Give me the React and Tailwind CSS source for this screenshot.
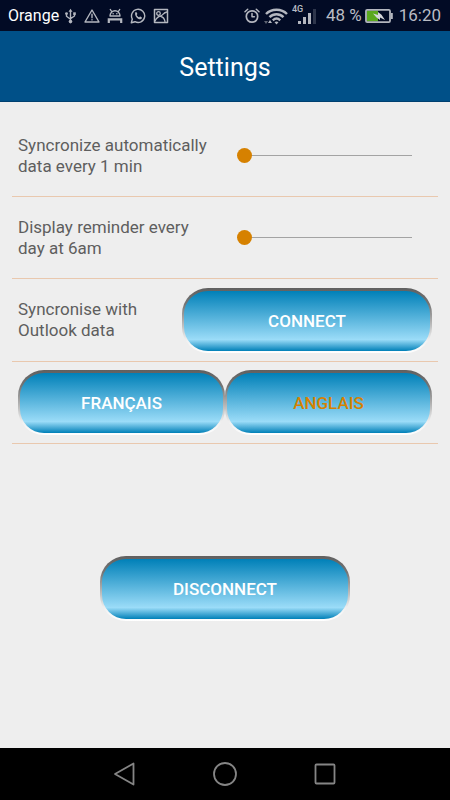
import { useState } from "react";

const glossyButtonClass =
  "h-[65px] cursor-pointer rounded-[26px] border-2 border-t-[3px] border-transparent pt-[2px] text-[17px] font-medium uppercase [background:linear-gradient(to_bottom,#0080b8_0%,#9bdcf8_81%,#0080b8_100%)_padding-box,linear-gradient(to_bottom,#606060_0%,#757575_25%,#f0f0f0_80%,#ffffff_100%)_border-box]";

const sliderClass =
  "block h-4 w-full cursor-pointer appearance-none bg-transparent [&::-webkit-slider-runnable-track]:h-px [&::-webkit-slider-runnable-track]:bg-[#a3a3a3] [&::-webkit-slider-thumb]:-mt-[7px] [&::-webkit-slider-thumb]:size-[15px] [&::-webkit-slider-thumb]:appearance-none [&::-webkit-slider-thumb]:rounded-full [&::-webkit-slider-thumb]:bg-[#d68100]";

const rowClass =
  "flex min-h-[82px] items-center border-b border-[#e9c8ae] px-[6px]";

const labelClass = "text-[17px] leading-[21px] text-[#5e5e5e]";

function StatusIcon({ width = 16, children }) {
  return (
    <svg
      width={width}
      height="16"
      viewBox={`0 0 ${width} 16`}
      fill="none"
      stroke="#b4b7bf"
      strokeWidth="1.4"
      strokeLinecap="round"
      strokeLinejoin="round"
      className="shrink-0"
      aria-hidden
    >
      {children}
    </svg>
  );
}

function StatusBar() {
  return (
    <div className="flex h-[31px] items-center justify-between bg-[#020b25] pr-[9px] pl-2 text-[17px] text-[#b9bcc4]">
      <div className="flex items-center">
        <span className="pr-[5px] text-base leading-5 text-white">Orange</span>
        <div className="flex items-center gap-[7px]">
          {/* USB */}
          <StatusIcon width={13}>
            <path d="M6.5 3v9M2.5 6v2.2l4 3M10.5 6v2l-4 2.6" />
            <path d="M4.5 3.8 6.5 .8l2 3z" fill="#b4b7bf" stroke="none" />
            <circle cx="2.5" cy="5.6" r="1.4" fill="#b4b7bf" stroke="none" />
            <path d="M9.2 4.3h2.6v2.6H9.2z" fill="#b4b7bf" stroke="none" />
            <circle cx="6.5" cy="13.6" r="1.8" fill="#b4b7bf" stroke="none" />
          </StatusIcon>
          {/* Warning */}
          <StatusIcon>
            <path d="M8 2 15 14H1z" />
            <path d="M8 6.3v3.4M8 11.6v.3" />
          </StatusIcon>
          {/* Android debug */}
          <StatusIcon>
            <path d="M3 8a5 5.2 0 0 1 10 0z" />
            <path d="M4.6 3.4 3.2 1.4M11.4 3.4l1.4-2" strokeWidth="1.2" />
            <path d="M6.1 5.8h.1M9.8 5.8h.1" strokeWidth="1.5" />
            <path
              d="M1.8 15v-3.6h12.4V15"
              strokeWidth="2.2"
              strokeLinecap="butt"
              strokeLinejoin="miter"
            />
          </StatusIcon>
          {/* WhatsApp */}
          <StatusIcon>
            <path d="M1.3 14.7 2.3 11A6.6 6.6 0 1 1 5 13.7z" />
            <path
              d="M5.3 4.4c.6-.6 1.2-.4 1.5.3l.5 1.1c.1.4-.5.9-.6 1.2.4 1 1.3 1.9 2.4 2.3.4-.1.8-.9 1.2-.8l1.3.7c.6.4.3 1.3-.3 1.7-2.7 1.5-7.3-3-6-6.5z"
              fill="#b4b7bf"
              stroke="none"
            />
          </StatusIcon>
          {/* Picture */}
          <StatusIcon>
            <path d="M1.5 1.5h13v13h-13z" strokeWidth="1.5" />
            <circle cx="5.5" cy="5.5" r="1.8" strokeWidth="1.3" />
            <path d="M2 13c1.500-3 3-4.500 5.500-5S10 4.500 14 4M8 8.500c2 .5 3.500 2.500 4 5" strokeWidth="1.3" />
          </StatusIcon>
        </div>
      </div>

      <div className="flex items-center">
        {/* Alarm */}
        <StatusIcon>
          <circle cx="8" cy="8.5" r="5.7" strokeWidth="1.7" />
          <path
            d="M8 5.5v3.2h2.4M1 3.8l2.7-2.5M15 3.8l-2.7-2.5"
            strokeWidth="1.5"
          />
        </StatusIcon>
        {/* Wi-Fi */}
        <svg
          width="24"
          height="18"
          viewBox="0 0 24 18"
          fill="none"
          className="ml-1 shrink-0"
          aria-hidden
        >
          <g stroke="#b4b7bf" strokeWidth="2.4">
            <path d="M2 7c5.500-5.700 15.500-5.700 21 0" />
            <path d="M5.5 10.2c4-3.900 10-3.900 14 0" />
            <path d="M8.8 13.3c2.400-2.200 5.200-2.200 7.400 0" />
          </g>
          <path d="m12.500 17.500-2-2.200c1.200-1 2.800-1 4 0z" fill="#b4b7bf" />
          <path d="m0 14 2 3 2-3z" fill="#5e6473" />
          <path d="m4 16 2-3 2 3z" fill="#b4b7bf" />
        </svg>
        {/* Mobile signal */}
        <div className="relative ml-1 h-5 w-6">
          <span className="absolute -top-[2px] left-0 text-[9px] leading-[10px] font-medium">
            4G
          </span>
          <div className="flex h-full items-end gap-[2px] pb-[2px] pl-[6px]">
            <i className="h-[3px] w-[3px] bg-[#b4b7bf]" />
            <i className="h-[7px] w-[3px] bg-[#b4b7bf]" />
            <i className="h-[11px] w-[3px] bg-[#b4b7bf]" />
            <i className="h-[15px] w-[3px] bg-[#2e364c]" />
          </div>
        </div>
        <span className="ml-[10px]">48 %</span>
        {/* Battery */}
        <svg
          width="28"
          height="16"
          viewBox="0 0 28 16"
          fill="none"
          className="ml-[3px] shrink-0"
          aria-hidden
        >
          <rect x="2" y="2.5" width="11" height="11" fill="#5aa81e" />
          <rect
            x="1"
            y="1.8"
            width="24"
            height="12.4"
            rx="1.2"
            stroke="#b4b7bf"
            strokeWidth="1.8"
          />
          <path d="M26.8 5v6" stroke="#b4b7bf" strokeWidth="2" />
          <path d="m8 5.500 5 1.500V4l3.500 2.800L20 12l-5-2.500V12l-3.500-2.500z" fill="#d4d6da" />
        </svg>
        <span className="ml-[6px]">16:20</span>
      </div>
    </div>
  );
}

function SliderRow({ id, label, max, value, onChange }) {
  return (
    <div className={rowClass}>
      <label htmlFor={id} className={`${labelClass} w-1/2 pr-2`}>
        {label}
      </label>
      <div className="w-1/2 pr-5 pl-3">
        <input
          id={id}
          type="range"
          min="0"
          max={max}
          value={value}
          onChange={(e) => onChange(Number(e.target.value))}
          className={sliderClass}
        />
      </div>
    </div>
  );
}

function NavIcon({ children }) {
  return (
    <svg
      width="24"
      height="24"
      viewBox="0 0 24 24"
      fill="none"
      stroke="#858585"
      strokeWidth="1.8"
      strokeLinejoin="round"
      aria-hidden
    >
      {children}
    </svg>
  );
}

function NavigationBar() {
  return (
    <nav
      className="flex h-[52px] items-center justify-center gap-[76px] bg-black"
      aria-label="System"
    >
      <button type="button" aria-label="Back">
        <NavIcon>
          <path d="M2 12 20.5 1.5v21z" />
        </NavIcon>
      </button>
      <button type="button" aria-label="Home">
        <NavIcon>
          <circle cx="12" cy="12" r="11" />
        </NavIcon>
      </button>
      <button type="button" aria-label="Recent apps">
        <NavIcon>
          <rect x="2.5" y="2.5" width="19" height="19" rx="1" />
        </NavIcon>
      </button>
    </nav>
  );
}

export default function App() {
  const [syncStep, setSyncStep] = useState(0);
  const [reminderStep, setReminderStep] = useState(0);
  const [language, setLanguage] = useState("en");

  return (
    <div className="flex min-h-screen flex-col bg-[#eeeeee] font-['Roboto',sans-serif]">
      <StatusBar />
      <header className="flex h-[71px] items-center justify-center border-b border-[#004070] bg-[#005088] pt-1">
        <h1 className="text-[25px] leading-8 text-white">Settings</h1>
      </header>

      <main className="flex flex-1 flex-col px-3 pt-[13px]">
        <SliderRow
          id="sync"
          label={`Syncronize automatically data every ${syncStep + 1} min`}
          max={59}
          value={syncStep}
          onChange={setSyncStep}
        />
        <SliderRow
          id="reminder"
          label={`Display reminder every day at ${reminderStep + 6}am`}
          max={5}
          value={reminderStep}
          onChange={setReminderStep}
        />
        <div className={`${rowClass} min-h-[83px]`}>
          <span id="outlook" className={`${labelClass} flex-1 pr-5`}>
            Syncronise with Outlook data
          </span>
          <button
            type="button"
            aria-describedby="outlook"
            className={`${glossyButtonClass} w-[250px] text-white`}
          >
            Connect
          </button>
        </div>
        <div className={rowClass}>
          <button
            type="button"
            onClick={() => setLanguage("fr")}
            className={`${glossyButtonClass} flex-1 ${language === "fr" ? "text-[#d68100]" : "text-white"}`}
          >
            Français
          </button>
          <button
            type="button"
            onClick={() => setLanguage("en")}
            className={`${glossyButtonClass} flex-1 ${language === "en" ? "text-[#d68100]" : "text-white"}`}
          >
            Anglais
          </button>
        </div>
        <button
          type="button"
          className={`${glossyButtonClass} mx-auto mt-28 w-[250px] text-white`}
        >
          Disconnect
        </button>
      </main>

      <NavigationBar />
    </div>
  );
}
